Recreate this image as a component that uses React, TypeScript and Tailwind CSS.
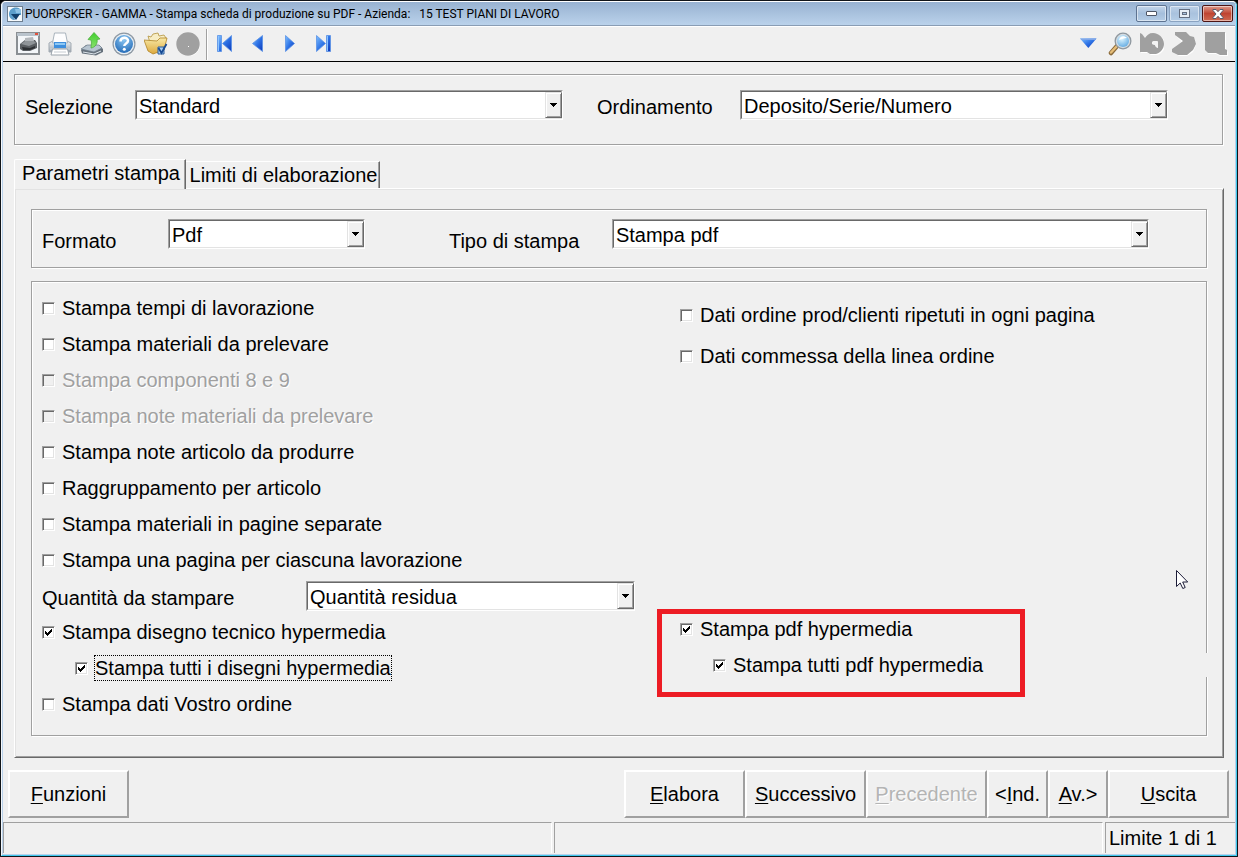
import { useState, type ReactNode } from "react"

const etched =
  "border border-[#a0a0a0] shadow-[1px_1px_0_#fff,inset_1px_1px_0_#fff]"

interface ComboProps {
  id: string
  options: string[]
  className: string
}

function Combo({ id, options, className }: ComboProps) {
  return (
    <div
      className={`relative h-[30px] border border-t-[#a0a0a0] border-l-[#a0a0a0] border-r-white border-b-white bg-white ${className}`}
    >
      <select
        id={id}
        className="block h-full w-full appearance-none border-t border-l border-r border-b border-t-[#696969] border-l-[#696969] border-r-[#e3e3e3] border-b-[#e3e3e3] bg-white pt-[2px] pl-[2px] leading-[24px] outline-none"
      >
        {options.map((o) => (
          <option key={o}>{o}</option>
        ))}
      </select>
      <span className="pointer-events-none absolute top-px right-0 bottom-px flex w-[17px] items-center justify-center border-t border-r border-b border-l border-t-[#e3e3e3] border-r-[#696969] border-b-[#696969] border-l-[#e3e3e3] bg-[#f0f0f0] shadow-[inset_1px_1px_0_#fff,inset_-1px_-1px_0_#a0a0a0]">
        <svg width="7" height="4" viewBox="0 0 7 4" shapeRendering="crispEdges">
          <path d="M0 0h7v1h-1v1h-1v1h-1v1h-1v-1h-1v-1h-1v-1h-1z" />
        </svg>
      </span>
    </div>
  )
}

interface CheckProps {
  label: string
  checked?: boolean
  disabled?: boolean
  focused?: boolean
  className?: string
}

function Check({ label, checked = false, disabled, focused, className = "h-[36px]" }: CheckProps) {
  const [on, setOn] = useState(checked)
  return (
    <div className={`flex items-center ${className}`}>
      <label className="flex items-center gap-[7px]">
        <span className="grid size-[13px]">
          <input
            type="checkbox"
            checked={on}
            disabled={disabled}
            onChange={() => setOn(!on)}
            className="col-start-1 row-start-1 size-[13px] appearance-none border border-t-[#a0a0a0] border-r-white border-b-white border-l-[#a0a0a0] bg-white shadow-[inset_1px_1px_0_#696969,inset_-1px_-1px_0_#e3e3e3] outline-none disabled:bg-[#f0f0f0]"
          />
          {on && (
            <svg
              className="pointer-events-none col-start-1 row-start-1"
              viewBox="0 0 13 13"
              shapeRendering="crispEdges"
            >
              <path d="M3 5h1v1h1v1h1v-1h1v-1h1v-1h1v-1h1v3h-1v1h-1v1h-1v1h-1v1h-1v-1h-1v-1h-1z" />
            </svg>
          )}
        </span>
        <span
          className={`leading-[24px] whitespace-nowrap ${
            disabled ? "text-[#a0a0a0] [text-shadow:1px_1px_0_#fff]" : ""
          } ${focused ? "outline-1 outline-black outline-dotted" : ""}`}
        >
          {label}
        </span>
      </label>
    </div>
  )
}

interface PushProps {
  before?: string
  hot: string
  rest: string
  width: string
  disabled?: boolean
}

function Push({ before, hot, rest, width, disabled }: PushProps) {
  return (
    <button
      type="button"
      disabled={disabled}
      className={`h-[48px] border-2 border-t-white border-r-[#a0a0a0] border-b-[#a0a0a0] border-l-white disabled:text-[#b4b4b4] disabled:[text-shadow:1px_1px_0_#fff] ${width}`}
    >
      {before}
      <span className="underline decoration-1 underline-offset-2">{hot}</span>
      {rest}
    </button>
  )
}

function Tool({ label, children }: { label: string; children: ReactNode }) {
  return (
    <button type="button" aria-label={label} className="size-6">
      <svg width="24" height="24" viewBox="0 0 24 24">
        {children}
      </svg>
    </button>
  )
}

function Gradients() {
  return (
    <svg width="0" height="0" className="absolute">
      <defs>
        <linearGradient id="blue" x1="0" y1="0" x2="1" y2="1">
          <stop offset="0" stopColor="#7fc0ff" />
          <stop offset="0.5" stopColor="#2f74e6" />
          <stop offset="1" stopColor="#0b36b8" />
        </linearGradient>
        <linearGradient id="silver" x1="0" y1="0" x2="0" y2="1">
          <stop offset="0" stopColor="#f4f6f8" />
          <stop offset="1" stopColor="#98a2ac" />
        </linearGradient>
        <linearGradient id="green" x1="0" y1="0" x2="0" y2="1">
          <stop offset="0" stopColor="#3fd02c" />
          <stop offset="1" stopColor="#8be070" />
        </linearGradient>
        <linearGradient id="folder" x1="0" y1="0" x2="0" y2="1">
          <stop offset="0" stopColor="#f8e9a6" />
          <stop offset="1" stopColor="#dca83c" />
        </linearGradient>
        <radialGradient id="help" cx="0.5" cy="0.25" r="0.8">
          <stop offset="0" stopColor="#8cc8f4" />
          <stop offset="1" stopColor="#1f66b4" />
        </radialGradient>
        <radialGradient id="lens" cx="0.4" cy="0.3" r="0.8">
          <stop offset="0" stopColor="#e0f6ff" />
          <stop offset="1" stopColor="#5aa6e0" />
        </radialGradient>
      </defs>
    </svg>
  )
}

function TitleBar() {
  const box =
    "flex h-[17px] w-[31px] items-center justify-center rounded-[2px] border shadow-[inset_0_0_0_1px_rgba(255,255,255,0.5)]"
  return (
    <header className="flex h-6 items-center border-b border-[#8a9db4] bg-linear-to-b from-[#98b2d1] to-[#bad2eb] pr-[2px] pl-[4px]">
      <svg width="16" height="16" viewBox="0 0 16 16">
        <rect width="16" height="16" fill="#6e7f90" />
        <rect x="1" y="1" width="14" height="14" fill="#f6fafd" />
        <path d="M13 3C9 0 2 2 2 8c0 4 3 6 6 6l-2-5h8V5z" fill="#5c9ecb" />
        <path d="M4 8h9l-4 6z" fill="#123f6b" />
        <path d="M8 3h6v4H9z" fill="#8fc3e6" />
      </svg>
      <h1 className="flex-1 pl-[2px] font-[Roboto,'Open_Sans',sans-serif] text-[12px] whitespace-pre">
        PUORPSKER - GAMMA - Stampa scheda di produzione su PDF - Azienda:   15 TEST PIANI DI LAVORO
      </h1>
      <div className="flex">
        <button
          type="button"
          aria-label="Riduci a icona"
          className={`${box} border-[#5d7391] bg-linear-to-b from-[#c4d6ea] via-[#a5bfdc] to-[#b5cde6]`}
        >
          <svg width="11" height="5" viewBox="0 0 11 5">
            <rect x="0.5" y="0.5" width="10" height="4" rx="0.5" fill="#fff" stroke="#4f5766" />
          </svg>
        </button>
        <button
          type="button"
          aria-label="Ingrandisci"
          className={`${box} ml-[2px] border-[#8aa3c1] bg-linear-to-b from-[#bcd0e6] via-[#a9c2de] to-[#b5cde6]`}
        >
          <svg width="11" height="9" viewBox="0 0 11 9" fill="none" stroke="#646e80">
            <rect x="0.5" y="0.5" width="10" height="8" fill="#e8eef5" />
            <rect x="3.5" y="3.5" width="4" height="2" fill="#a9c2de" />
          </svg>
        </button>
        <button
          type="button"
          aria-label="Chiudi"
          className={`${box} ml-[2px] border-[#4c1414] bg-linear-to-b from-[#dd9a8c] via-[#bf4432] to-[#cf6a52]`}
        >
          <svg width="12" height="10" viewBox="0 0 12 10">
            <path
              d="M1 .5h3l2 2.2L8 .5h3v1L8 5l3 3.5v1H8L6 7.3 4 9.5H1v-1L4 5 1 1.5z"
              fill="#fff"
              stroke="#565b6c"
            />
          </svg>
        </button>
      </div>
    </header>
  )
}

function Toolbar() {
  return (
    <div
      role="toolbar"
      className="flex h-[36px] items-center border-t border-b border-t-white border-b-black pr-[7px] pl-[13px]"
    >
      <div className="flex gap-2">
        <Tool label="Anteprima">
          <rect x="1" y="1" width="22" height="21" fill="#f3f6f9" stroke="#8a8f93" strokeWidth="2" />
          <path d="M1 1h22v3H1z" fill="#b9c3cc" />
          <path d="M19 1h3v2h-3z" fill="#e0503c" />
          <path d="M4 12l5-4h10l2 3v5l-7 3H7l-3-2z" fill="#5a5e62" />
          <path d="M9 6l8-1 1 4-9 1z" fill="#b4b8bc" />
          <path d="M5 12l4-3h9l2 2-7 3z" fill="#8f9498" />
          <path d="M6 15l8 1 5-2v2l-5 2H7z" fill="#2c2f32" />
        </Tool>
        <Tool label="Stampa">
          <path d="M1 11l4-2h14l4 2v9H1z" fill="url(#silver)" stroke="#a3abb3" />
          <path d="M6.500 1h11l2 10h-15z" fill="#fdfdfe" stroke="#a9b3bc" />
          <path d="M6 10h12v6H6z" fill="#3f8fdd" />
          <path d="M7 11h10v2H7z" fill="#8ec8f4" />
          <path d="M2 17h20" stroke="#d5dade" />
          <path d="M4.500 17h15l1.500 6H3z" fill="#fff" stroke="#9aa3ab" />
          <path d="M6 20h12" stroke="#c6ccd2" />
        </Tool>
        <Tool label="Esporta">
          <path d="M1 18l5-5h13l4 4v3l-7 3.500-14-2z" fill="#66717c" />
          <path d="M1 17l6-4h12l3 3-8 4z" fill="#b7c4d0" stroke="#6c7a88" strokeWidth="0.7" />
          <path d="M3 20l11 2 7-3" fill="none" stroke="#dde5ec" />
          <path
            d="M14 .5l6 6.500-3 .5c1 4-2 8-6 8.500 0-3 1-5 0-8L8 7.500z"
            fill="url(#green)"
            stroke="#4fae40"
            strokeWidth="0.8"
          />
        </Tool>
        <Tool label="Guida">
          <circle cx="12" cy="12" r="11.5" fill="#8d98a3" />
          <circle cx="12" cy="12" r="10.3" fill="#e9eff4" />
          <circle cx="12" cy="12" r="9" fill="url(#help)" />
          <path
            d="M8.500 9.500c0-5 7.500-5 7.500-.7 0 2.700-3.700 2.700-3.700 5.200"
            fill="none"
            stroke="#fff"
            strokeWidth="2.5"
          />
          <circle cx="12.3" cy="17.3" r="1.5" fill="#fff" />
        </Tool>
        <Tool label="Archivio">
          <path d="M4 4l3 1 2-3 5-1 1 3 5-1 2 3-2 12-11 3z" fill="#f7edc4" stroke="#b3933e" strokeWidth="0.8" />
          <path d="M0 8l13 1 3-3h7l-3 12-11 4-5-3z" fill="url(#folder)" stroke="#b08326" strokeWidth="0.8" />
          <path d="M14 15h6v7h-6z" fill="#a7cdef" stroke="#2b5d9c" />
          <path d="M14.500 16l3 5 5-9" fill="none" stroke="#174a94" strokeWidth="1.8" />
        </Tool>
        <Tool label="Interrompi">
          <circle cx="12.8" cy="12.8" r="11.2" fill="#fff" />
          <circle cx="12" cy="12" r="11.7" fill="#a0a0a0" />
          <path d="M12 14h1v1h-1z" fill="#fff" />
        </Tool>
      </div>
      <span className="ml-[6px] h-[31px] w-[2px] border-r border-l border-r-white border-l-[#a0a0a0]" />
      <div className="ml-[5px] flex gap-[9px]">
        <Tool label="Primo">
          <path d="M4.500 3.500h4v16h-4zM18.500 3.500v16l-9-8z" fill="url(#blue)" stroke="#5a92e6" strokeWidth="0.8" />
          <path d="M5.500 4v15" stroke="#8cc4ff" />
        </Tool>
        <Tool label="Indietro">
          <path d="M16.500 3.500v16l-10-8z" fill="url(#blue)" stroke="#5a92e6" strokeWidth="0.8" />
        </Tool>
        <Tool label="Avanti">
          <path d="M6.500 3.500v16l9-8z" fill="url(#blue)" stroke="#5a92e6" strokeWidth="0.8" />
        </Tool>
        <Tool label="Ultimo">
          <path d="M4.500 3.500v16l9-8zM14.500 3.500h4v16h-4z" fill="url(#blue)" stroke="#5a92e6" strokeWidth="0.8" />
          <path d="M15.500 4v15" stroke="#8cc4ff" />
        </Tool>
      </div>
      <div className="ml-auto flex gap-2">
        <Tool label="Altro">
          <path d="M4 6.500h16.500L12.300 16z" fill="url(#blue)" />
          <path d="M4 6.500h16.500l-1.500 1.500H5.500z" fill="#7fa6e8" />
        </Tool>
        <Tool label="Cerca">
          <path d="M9 14l-6 7" stroke="#8a6a3a" strokeWidth="4.5" strokeLinecap="round" />
          <path d="M9 14l-6 6.500" stroke="#e5bd78" strokeWidth="2.5" strokeLinecap="round" />
          <circle cx="15" cy="9" r="8.5" fill="#8f989f" />
          <circle cx="15" cy="9" r="7.2" fill="#d4dce2" />
          <circle cx="15" cy="9" r="6" fill="url(#lens)" />
          <path d="M11 8c1-4 5-5 8-2-3 0-5 1-8 2z" fill="#fff" />
        </Tool>
        <Tool label="Annulla">
          <path
            d="M1 2l5 5c2-3 4-5 8-5 6 0 11 5 11 11 0 5-4 9-8 10h-6l-3-2H1zM12 11l2-1h3l1 1v6l-2-1-1-2-3-1z"
            fill="#fff"
            fillRule="evenodd"
          />
          <path
            d="M0 1l2 1 3 4c2-3 4-5 8-5 6 0 11 5 11 11 0 5-4 9-8 10h-6l-3-2H0zM12 10l2-1h3l1 1v6l-2-1-1-2-3-1z"
            fill="#a0a0a0"
            fillRule="evenodd"
          />
          <path d="M12 10l2-1h3l1 1v6l-2-1-1-2-3-1z" fill="#f4f4f4" />
        </Tool>
        <Tool label="Ripristina">
          <path d="M4 1h11l4 4 3 1 2 7-3 7-6 4H7l-5-3v-4l6-5 1-3-5-5z" fill="#fff" />
          <path d="M3 0h11l4 4 4 1 2 7-3 6-6 5H6l-6-3v-3l7-5 4-3-8-6z" fill="#a0a0a0" />
        </Tool>
        <Tool label="Salva">
          <path d="M2 1h20v17l2 2v4h-8l-4-2H4l-2-3z" fill="#fff" />
          <path d="M1 0h20v17l2 1v5h-7l-4-2H4l-3-3z" fill="#a0a0a0" />
        </Tool>
      </div>
    </div>
  )
}

export default function App() {
  return (
    <div className="bg-black">
      <div className="relative flex min-h-screen flex-col rounded-t-[6px] border border-[#101418] bg-[#f0f0f0] font-['Liberation_Sans',Arial,sans-serif] text-[20px] leading-[24px] text-black">
        <Gradients />
        <div className="flex flex-1 flex-col overflow-hidden rounded-t-[5px] border border-t-white border-r-[#3fc8ec] border-b-[#3fc8ec] border-l-[#f4f8fc]">
          <div className="flex flex-1 flex-col border-r border-b border-l border-[#b9d1ea]">
            <TitleBar />
            <Toolbar />

            <main className="flex flex-1 flex-col pt-3 pr-[11px] pl-[11px]">
              <section className={`mr-px flex h-[71px] items-start pt-[15px] pr-[54px] pl-[10px] ${etched}`}>
                <label htmlFor="selezione" className="w-[110px] pt-[5px]">
                  Selezione
                </label>
                <Combo id="selezione" options={["Standard"]} className="flex-1" />
                <label htmlFor="ordinamento" className="ml-[34px] w-[143px] pt-[5px]">
                  Ordinamento
                </label>
                <Combo id="ordinamento" options={["Deposito/Serie/Numero"]} className="flex-1" />
              </section>

              <div role="tablist" className="mt-[14px] flex h-[29px] items-end">
                <button
                  type="button"
                  role="tab"
                  aria-selected="true"
                  className="relative z-10 -mb-px h-[30px] w-[172px] rounded-tl-[2px] border-t border-r border-l border-t-white border-r-[#696969] border-l-white bg-[#f0f0f0] pb-[4px] pl-[2px] shadow-[inset_-1px_0_0_#a0a0a0]"
                >
                  Parametri stampa
                </button>
                <button
                  type="button"
                  role="tab"
                  aria-selected="false"
                  className="h-[27px] w-[194px] border-t border-r border-t-white border-r-[#696969] pl-[2px] shadow-[inset_-1px_0_0_#a0a0a0]"
                >
                  Limiti di elaborazione
                </button>
              </div>

              <section
                role="tabpanel"
                className="flex-1 border border-t-white border-r-[#696969] border-b-[#696969] border-l-white px-[16px] py-[20px] shadow-[inset_1px_1px_0_#e3e3e3,inset_-1px_-1px_0_#a0a0a0]"
              >
                <div className={`flex h-[59px] items-start pt-[9px] pr-[57px] pl-[10px] ${etched}`}>
                  <label htmlFor="formato" className="w-[126px] pt-[10px]">
                    Formato
                  </label>
                  <Combo id="formato" options={["Pdf"]} className="flex-[196]" />
                  <label htmlFor="tipo" className="ml-[84px] w-[163px] pt-[10px]">
                    Tipo di stampa
                  </label>
                  <Combo id="tipo" options={["Stampa pdf"]} className="flex-[538]" />
                </div>

                <div
                  className={`relative mt-[13px] grid grid-cols-[625fr_549fr] pt-2 pb-[13px] ${etched}`}
                >
                  <div className="pr-[22px] pl-[10px]">
                    <Check label="Stampa tempi di lavorazione" />
                    <Check label="Stampa materiali da prelevare" />
                    <Check label="Stampa componenti 8 e 9" disabled />
                    <Check label="Stampa note materiali da prelevare" disabled />
                    <Check label="Stampa note articolo da produrre" />
                    <Check label="Raggruppamento per articolo" />
                    <Check label="Stampa materiali in pagine separate" />
                    <Check label="Stampa una pagina per ciascuna lavorazione" />
                    <div className="flex h-[36px] items-center">
                      <label htmlFor="quantita" className="w-[264px] pt-[3px]">
                        Quantità da stampare
                      </label>
                      <Combo id="quantita" options={["Quantità residua"]} className="flex-1" />
                    </div>
                    <Check label="Stampa disegno tecnico hypermedia" checked />
                    <Check
                      label="Stampa tutti i disegni hypermedia"
                      checked
                      focused
                      className="h-[36px] pl-[33px]"
                    />
                    <Check label="Stampa dati Vostro ordine" />
                  </div>

                  <div className="flex flex-col items-start justify-between pt-[10px] pb-[25px]">
                    <div className="flex flex-col gap-[11px] pl-[23px]">
                      <Check
                        label="Dati ordine prod/clienti ripetuti in ogni pagina"
                        className="h-[30px]"
                      />
                      <Check label="Dati commessa della linea ordine" className="h-[30px]" />
                    </div>
                    <div className="flex w-[368px] flex-col gap-[6px] border-5 border-[#ed1c24] pb-3 pl-[18px]">
                      <Check label="Stampa pdf hypermedia" checked className="h-[30px]" />
                      <Check
                        label="Stampa tutti pdf hypermedia"
                        checked
                        className="h-[30px] pl-[33px]"
                      />
                    </div>
                  </div>

                  {/* break in the frame's right edge */}
                  <span className="absolute -right-[2px] bottom-[58px] h-6 w-[3px] bg-[#f0f0f0]" />
                </div>
              </section>
            </main>

            <footer>
              <div className="flex pt-3 pr-[6px] pl-[5px]">
                <Push hot="F" rest="unzioni" width="w-[121px]" />
                <div className="ml-auto flex">
                  <Push hot="E" rest="labora" width="w-[121px]" />
                  <Push hot="S" rest="uccessivo" width="w-[121px]" />
                  <Push hot="P" rest="recedente" width="w-[121px]" disabled />
                  <Push before="<" hot="I" rest="nd." width="w-[61px]" />
                  <Push hot="A" rest="v.>" width="w-[60px]" />
                  <Push hot="U" rest="scita" width="w-[121px]" />
                </div>
              </div>
              <div className="mt-1 flex h-8 gap-[2px] pb-px">
                <div className="flex-1 border-t border-r border-l border-t-[#a0a0a0] border-r-white border-l-[#a0a0a0]" />
                <div className="flex-1 border-t border-r border-l border-t-[#a0a0a0] border-r-white border-l-[#a0a0a0]" />
                <div className="w-[130px] border-t border-l border-[#a0a0a0] pt-[3px] pl-[3px]">
                  Limite 1 di 1
                </div>
              </div>
            </footer>
          </div>
        </div>

        <svg
          className="pointer-events-none absolute top-[569px] right-[48px]"
          width="13"
          height="20"
          viewBox="0 0 13 20"
        >
          <path
            d="M.5.5v16l3.700-3.500 2.600 5.500 2.400-1-2.500-5.500h5z"
            fill="#fff"
            stroke="#1c1c38"
          />
        </svg>
      </div>
    </div>
  )
}
